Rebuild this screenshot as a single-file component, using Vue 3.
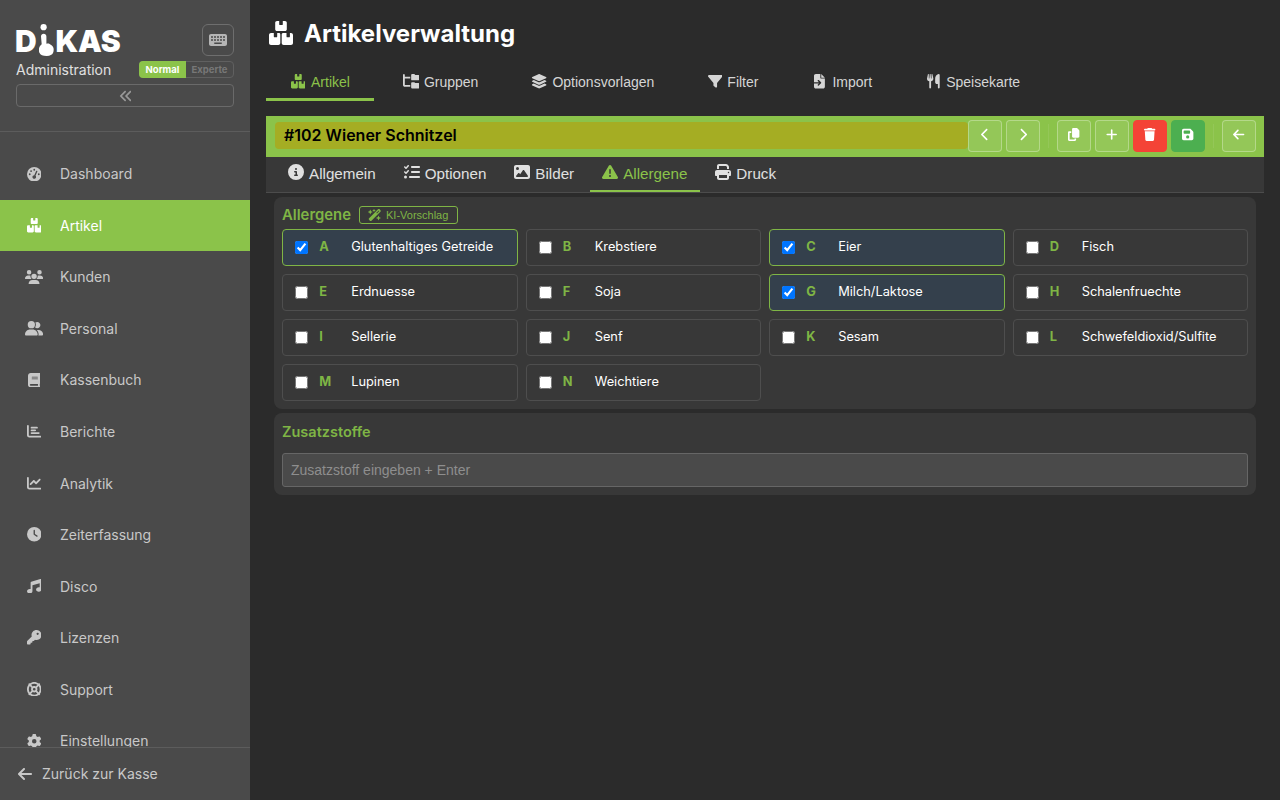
<template>
  <div class="app">
    <aside class="sidebar">
      <div class="side-head">
        <div class="logo-row">
          <div class="logo">
            <span>D</span>
            <svg class="finger" viewBox="0 0 15 32">
              <circle cx="4.6" cy="3.2" r="3.1" />
              <path d="M2 12.5c0-1.6 1.2-2.7 2.7-2.7s2.7 1.1 2.7 2.7v7.300c1-.5 2.300-.5 3.200.1 1.600.9 3.200 2 3.800 3.800.500 1.600.300 4-.400 5.400-.900 1.700-2.800 2.900-6.300 2.900-3.800 0-6.300-.900-7.300-3.200-.900-2-.700-4.500.300-6.300.600-1 1.300-1.700 2-2.300z" />
            </svg>
            <span>KAS</span>
          </div>
          <button class="kbd-btn" type="button">
            <svg class="ico" viewBox="0 0 576 512"><path fill-rule="evenodd" :d="icons.keyboard" /></svg>
          </button>
        </div>
        <div class="sub-row">
          <span class="sub-title">Administration</span>
          <div class="mode">
            <span class="mode-on">Normal</span>
            <span class="mode-off">Experte</span>
          </div>
        </div>
        <button class="collapse" type="button">
          <svg class="ico" viewBox="0 0 448 512"><path :d="icons.anglesLeft" /></svg>
        </button>
      </div>
      <nav class="side-nav">
        <a v-for="item in navItems" :key="item.label" class="nav-item" :class="{ active: item.label === 'Artikel' }">
          <span class="nav-icon">
            <svg class="ico" :viewBox="viewBox(item)"><path :d="icons[item.icon]" /></svg>
          </span>
          {{ item.label }}
        </a>
      </nav>
      <div class="side-foot">
        <svg class="ico" viewBox="0 0 448 512"><path :d="icons.arrowLeft" /></svg>
        Zurück zur Kasse
      </div>
    </aside>

    <main class="main">
      <h1 class="page-title">
        <svg class="ico" viewBox="0 0 24 24"><path :d="icons.boxes" /></svg>
        Artikelverwaltung
      </h1>
      <div class="top-tabs">
        <a v-for="tab in topTabs" :key="tab.label" class="top-tab" :class="{ active: tab.label === 'Artikel' }">
          <span class="tab-icon">
            <svg class="ico" :viewBox="viewBox(tab)"><path :d="icons[tab.icon]" /></svg>
          </span>
          {{ tab.label }}
        </a>
      </div>

      <div class="item-bar">
        <div class="item-name">#102 Wiener Schnitzel</div>
        <button class="bar-btn" type="button"><svg class="ico" viewBox="0 0 320 512"><path :d="icons.chevronLeft" /></svg></button>
        <button class="bar-btn" type="button"><svg class="ico" viewBox="0 0 320 512"><path :d="icons.chevronRight" /></svg></button>
        <span class="bar-sep"></span>
        <button class="bar-btn" type="button"><svg class="ico" viewBox="0 0 448 512"><path :d="icons.copy" /></svg></button>
        <button class="bar-btn" type="button"><svg class="ico" viewBox="0 0 448 512"><path :d="icons.plus" /></svg></button>
        <button class="bar-btn red" type="button"><svg class="ico" viewBox="0 0 448 512"><path :d="icons.trash" /></svg></button>
        <button class="bar-btn green" type="button"><svg class="ico" viewBox="0 0 448 512"><path :d="icons.floppy" /></svg></button>
        <span class="bar-sep"></span>
        <button class="bar-btn" type="button"><svg class="ico" viewBox="0 0 448 512"><path :d="icons.arrowLeft" /></svg></button>
      </div>

      <div class="sub-tabs">
        <a v-for="tab in subTabs" :key="tab.label" class="sub-tab" :class="{ active: tab.label === 'Allergene' }">
          <svg class="ico" viewBox="0 0 512 512"><path :d="icons[tab.icon]" /></svg>
          {{ tab.label }}
        </a>
      </div>

      <section class="panel allergens">
        <div class="panel-head">
          <span class="panel-title">Allergene</span>
          <button class="ai-btn" type="button">
            <svg class="ico" viewBox="0 0 576 512"><path :d="icons.wand" /></svg>
            KI-Vorschlag
          </button>
        </div>
        <div class="allergen-grid">
          <label v-for="a in allergens" :key="a.code" class="allergen" :class="{ selected: a.on }">
            <input type="checkbox" :checked="a.on" />
            <span class="code">{{ a.code }}</span>
            <span class="name">{{ a.name }}</span>
          </label>
        </div>
      </section>

      <section class="panel additives">
        <div class="panel-title">Zusatzstoffe</div>
        <input class="add-input" type="text" placeholder="Zusatzstoff eingeben + Enter" />
      </section>
    </main>
  </div>
</template>

<script setup>
const icons = {
  keyboard: 'M64 64C28.7 64 0 92.700 0 128V384c0 35.300 28.700 64 64 64H512c35.300 0 64-28.700 64-64V128c0-35.300-28.700-64-64-64H64zM72 128h48v64H72zM168 128h48v64H168zM264 128h48v64H264zM360 128h48v64H360zM456 128h48v64H456zM72 224h48v64H72zM168 224h48v64H168zM264 224h48v64H264zM360 224h48v64H360zM456 224h48v64H456zM168 336H408v48H168z',
  anglesLeft: 'M41.4 233.4c-12.5 12.5-12.5 32.8 0 45.3l160 160c12.5 12.5 32.8 12.5 45.3 0s12.5-32.8 0-45.3L109.3 256 246.6 118.6c12.5-12.5 12.5-32.8 0-45.3s-32.8-12.5-45.3 0l-160 160zm352-160l-160 160c-12.5 12.5-12.5 32.8 0 45.3l160 160c12.5 12.5 32.8 12.5 45.3 0s12.5-32.8 0-45.3L301.3 256 438.6 118.6c12.5-12.5 12.5-32.8 0-45.3s-32.8-12.5-45.3 0z',
  gauge: 'M0 256a256 256 0 1 1 512 0A256 256 0 1 1 0 256zM288 96a32 32 0 1 0 -64 0 32 32 0 1 0 64 0zM256 416c35.3 0 64-28.7 64-64c0-17.4-6.9-33.1-18.1-44.6L366 161.7c5.3-12.1-.2-26.3-12.3-31.6s-26.3 .2-31.6 12.3L257.9 288c-.6 0-1.3 0-1.9 0c-35.3 0-64 28.7-64 64s28.7 64 64 64zM176 144a32 32 0 1 0 -64 0 32 32 0 1 0 64 0zM96 288a32 32 0 1 0 0-64 32 32 0 1 0 0 64zm352-32a32 32 0 1 0 -64 0 32 32 0 1 0 64 0z',
  boxes: 'M8 0h2.200v3.200c0 .5.4.9.9.9h1.800c.5 0 .9-.4.9-.9V0H16c1 0 1.800.8 1.800 1.800V8.200c0 1-.8 1.800-1.800 1.800H8c-1 0-1.800-.8-1.800-1.800V1.800C6.200.8 7 0 8 0zM2 12h2.800v3.400c0 .5.4.9.9.9h1.600c.5 0 .9-.4.9-.9V12H10c.9 0 1.300.6 1.300 1.500V22c0 1.100-.9 2-2 2H2c-1.100 0-2-.9-2-2V14c0-1.100.9-2 2-2zM14.700 12h2.800v3.400c0 .5.4.9.9.9h1.600c.5 0 .9-.4.9-.9V12H22c1.100 0 2 .9 2 2V22c0 1.100-.9 2-2 2H14.700c-1.100 0-2-.9-2-2V13.500c0-.9.400-1.500 2-1.500z',
  users: 'M144 0a80 80 0 1 1 0 160A80 80 0 1 1 144 0zM512 0a80 80 0 1 1 0 160A80 80 0 1 1 512 0zM0 298.700C0 239.800 47.800 192 106.700 192h42.700c15.900 0 31 3.500 44.600 9.700c-1.300 7.200-1.900 14.700-1.900 22.300c0 38.200 16.800 72.500 43.300 96c-.2 0-.4 0-.7 0H21.300C9.600 320 0 310.400 0 298.700zM405.300 320c-.2 0-.4 0-.7 0c26.600-23.500 43.300-57.800 43.300-96c0-7.600-.7-15-1.900-22.300c13.600-6.300 28.700-9.700 44.600-9.700h42.700C592.200 192 640 239.800 640 298.700c0 11.800-9.600 21.300-21.300 21.300H405.300zM224 224a96 96 0 1 1 192 0 96 96 0 1 1 -192 0zM128 485.300C128 411.700 187.700 352 261.300 352H378.700C452.300 352 512 411.700 512 485.300c0 14.700-11.900 26.700-26.700 26.700H154.700c-14.700 0-26.700-11.900-26.700-26.700z',
  userGroup: 'M96 128a128 128 0 1 1 256 0A128 128 0 1 1 96 128zM0 482.300C0 383.800 79.800 304 178.300 304h91.400C368.200 304 448 383.800 448 482.300c0 16.400-13.300 29.700-29.700 29.700H29.700C13.300 512 0 498.700 0 482.300zM609.300 512H471.400c5.400-9.400 8.600-20.300 8.600-32v-8c0-60.700-27.100-115.200-69.800-151.800c2.400-.1 4.700-.2 7.100-.2h61.400C567.800 320 640 392.200 640 481.300c0 17-13.800 30.700-30.700 30.700zM432 256c-31 0-59-12.600-79.300-32.900C372.400 196.500 384 163.600 384 128c0-26.800-6.600-52.100-18.300-74.300C384.300 40.100 407.200 32 432 32c61.900 0 112 50.100 112 112s-50.100 112-112 112z',
  book: 'M96 0C43 0 0 43 0 96V416c0 53 43 96 96 96H384h32c17.700 0 32-14.300 32-32s-14.300-32-32-32V384c17.700 0 32-14.300 32-32V32c0-17.700-14.300-32-32-32H384 96zm0 384H352v64H96c-17.700 0-32-14.300-32-32s14.300-32 32-32zm32-240c0-8.800 7.200-16 16-16H336c8.800 0 16 7.200 16 16s-7.200 16-16 16H144c-8.800 0-16-7.200-16-16zm16 48H336c8.800 0 16 7.200 16 16s-7.200 16-16 16H144c-8.800 0-16-7.200-16-16s7.200-16 16-16z',
  chartBar: 'M32 32c17.700 0 32 14.300 32 32V400c0 8.800 7.200 16 16 16H480c17.700 0 32 14.300 32 32s-14.300 32-32 32H80c-44.200 0-80-35.800-80-80V64C0 46.300 14.300 32 32 32zm96 96c0-17.700 14.300-32 32-32l192 0c17.700 0 32 14.300 32 32s-14.300 32-32 32l-192 0c-17.700 0-32-14.300-32-32zm32 64H288c17.700 0 32 14.300 32 32s-14.300 32-32 32H160c-17.700 0-32-14.300-32-32s14.300-32 32-32zm0 96H416c17.700 0 32 14.300 32 32s-14.300 32-32 32H160c-17.700 0-32-14.300-32-32s14.300-32 32-32z',
  chartLine: 'M64 64c0-17.700-14.300-32-32-32S0 46.300 0 64V400c0 44.200 35.800 80 80 80H480c17.700 0 32-14.300 32-32s-14.300-32-32-32H80c-8.800 0-16-7.200-16-16V64zm406.600 86.600c12.500-12.500 12.500-32.800 0-45.300s-32.800-12.500-45.300 0L320 210.700l-57.400-57.400c-12.500-12.500-32.800-12.500-45.300 0l-112 112c-12.500 12.500-12.500 32.800 0 45.300s32.800 12.500 45.300 0L240 221.300l57.400 57.400c12.500 12.500 32.800 12.500 45.300 0l128-128z',
  clock: 'M256 0a256 256 0 1 1 0 512A256 256 0 1 1 256 0zM232 120V256c0 8 4 15.500 10.700 20l96 64c11 7.400 25.900 4.400 33.300-6.700s4.400-25.900-6.700-33.300L280 243.200V120c0-13.300-10.700-24-24-24s-24 10.700-24 24z',
  music: 'M499.100 6.300c8.100 6 12.900 15.600 12.900 25.700v72V368c0 44.200-43 80-96 80s-96-35.800-96-80s43-80 96-80c11.200 0 22 1.600 32 4.600V147L192 223.800V432c0 44.200-43 80-96 80s-96-35.800-96-80s43-80 96-80c11.200 0 22 1.600 32 4.600V200 128c0-14.100 9.300-26.600 22.800-30.700l320-96c9.700-2.900 20.200-1.100 28.300 4.900z',
  key: 'M336 352c97.200 0 176-78.800 176-176S433.200 0 336 0S160 78.800 160 176c0 18.700 2.900 36.800 8.300 53.700L7 391c-4.500 4.500-7 10.600-7 17v80c0 13.300 10.700 24 24 24h80c13.300 0 24-10.700 24-24V448h40c13.300 0 24-10.700 24-24V384h40c6.400 0 12.500-2.500 17-7l33.300-33.300c16.900 5.400 35 8.300 53.700 8.300zM376 96a40 40 0 1 1 0 80 40 40 0 1 1 0-80z',
  lifeRing: 'M367.200 412.500C335.900 434.900 297.500 448 256 448s-79.900-13.100-111.200-35.500l58-58c15.800 8.600 34 13.500 53.300 13.500s37.400-4.900 53.300-13.500l58 58zm90.700 .8c33.800-43.400 54-98 54-157.300s-20.200-113.900-54-157.300c9-12.500 7.900-30.100-3.400-41.300S425.800 45 413.300 54C369.900 20.200 315.300 0 256 0S142.100 20.200 98.700 54c-12.500-9-30.100-7.900-41.300 3.400S45 86.200 54 98.700C20.200 142.100 0 196.700 0 256s20.200 113.900 54 157.300c-9 12.500-7.900 30.100 3.400 41.300S86.200 467 98.700 458c43.400 33.800 98 54 157.300 54s113.900-20.200 157.300-54c12.500 9 30.100 7.900 41.300-3.400s12.400-28.800 3.400-41.300zm-45.500-46.100l-58-58c8.600-15.800 13.500-34 13.500-53.300s-4.900-37.400-13.500-53.300l58-58C434.900 176.100 448 214.500 448 256s-13.100 79.900-35.500 111.200zM367.200 99.500l-58 58c-15.800-8.600-34-13.500-53.300-13.500s-37.400 4.900-53.300 13.500l-58-58C176.100 77.100 214.500 64 256 64s79.900 13.100 111.200 35.500zM157.500 309.300l-58 58C77.100 335.900 64 297.500 64 256s13.100-79.900 35.500-111.200l58 58c-8.600 15.800-13.500 34-13.500 53.300s4.900 37.400 13.500 53.300zM208 256a48 48 0 1 1 96 0 48 48 0 1 1 -96 0z',
  gear: 'M495.900 166.600c3.200 8.700 .5 18.400-6.400 24.600l-43.300 39.400c1.100 8.300 1.700 16.800 1.700 25.400s-.6 17.100-1.700 25.400l43.300 39.400c6.900 6.200 9.600 15.900 6.400 24.600c-4.400 11.900-9.700 23.300-15.800 34.300l-4.700 8.100c-6.600 11-14 21.400-22.100 31.200c-5.900 7.200-15.700 9.600-24.500 6.800l-55.700-17.700c-13.400 10.300-28.200 18.900-44 25.400l-12.500 57.100c-2 9.100-9 16.300-18.200 17.800c-13.800 2.300-28 3.500-42.500 3.500s-28.700-1.200-42.500-3.500c-9.200-1.500-16.200-8.700-18.200-17.800l-12.500-57.100c-15.800-6.500-30.600-15.100-44-25.400L83.100 425.900c-8.800 2.800-18.600 .3-24.500-6.800c-8.100-9.800-15.500-20.200-22.100-31.200l-4.700-8.100c-6.100-11-11.400-22.400-15.800-34.300c-3.200-8.700-.5-18.400 6.400-24.600l43.300-39.400C64.600 273.100 64 264.600 64 256s.6-17.100 1.700-25.400L22.400 191.200c-6.900-6.200-9.600-15.900-6.400-24.600c4.400-11.900 9.700-23.300 15.800-34.300l4.700-8.100c6.600-11 14-21.400 22.100-31.200c5.900-7.200 15.700-9.600 24.500-6.800l55.700 17.700c13.400-10.300 28.200-18.900 44-25.400l12.500-57.100c2-9.100 9-16.300 18.200-17.800C227.300 1.200 241.500 0 256 0s28.700 1.200 42.500 3.500c9.200 1.500 16.200 8.700 18.200 17.800l12.500 57.100c15.800 6.500 30.600 15.100 44 25.400l55.700-17.700c8.800-2.800 18.600-.3 24.500 6.800c8.100 9.800 15.500 20.200 22.100 31.200l4.700 8.100c6.100 11 11.400 22.400 15.800 34.300zM256 336a80 80 0 1 0 0-160 80 80 0 1 0 0 160z',
  arrowLeft: 'M9.400 233.400c-12.500 12.500-12.500 32.800 0 45.300l160 160c12.500 12.500 32.800 12.500 45.300 0s12.500-32.800 0-45.300L109.200 288 416 288c17.700 0 32-14.300 32-32s-14.300-32-32-32l-306.700 0L214.600 118.600c12.500-12.500 12.500-32.800 0-45.300s-32.800-12.500-45.300 0l-160 160z',
  folderTree: 'M64 32C64 14.300 49.700 0 32 0S0 14.300 0 32v96V384c0 35.300 28.700 64 64 64H256V384H64V160H256V96H64V32zM288 192c0 17.700 14.300 32 32 32H544c17.700 0 32-14.300 32-32V64c0-17.700-14.300-32-32-32H445.300c-8.500 0-16.600-3.400-22.600-9.400L409.400 9.400c-6-6-14.100-9.400-22.600-9.400H320c-17.700 0-32 14.300-32 32V192zm0 288c0 17.700 14.300 32 32 32H544c17.700 0 32-14.300 32-32V352c0-17.700-14.300-32-32-32H445.300c-8.500 0-16.600-3.400-22.600-9.400l-13.300-13.300c-6-6-14.100-9.400-22.600-9.400H320c-17.700 0-32 14.300-32 32V480z',
  layers: 'M264.500 5.200c14.900-6.900 32.100-6.900 47 0l218.600 101c8.500 3.900 13.900 12.400 13.900 21.800s-5.400 17.900-13.900 21.800l-218.600 101c-14.900 6.900-32.100 6.900-47 0L45.900 149.800C37.400 145.800 32 137.300 32 128s5.400-17.900 13.900-21.800L264.500 5.200zM476.900 209.600l53.200 24.600c8.500 3.900 13.900 12.400 13.900 21.800s-5.400 17.900-13.900 21.800l-218.600 101c-14.900 6.900-32.100 6.900-47 0L45.900 277.800C37.400 273.800 32 265.300 32 256s5.400-17.900 13.900-21.800l53.200-24.600 152 70.200c23.400 10.800 50.400 10.800 73.800 0l152-70.200zm-152 198.200l152-70.200 53.200 24.600c8.500 3.900 13.900 12.400 13.900 21.800s-5.400 17.900-13.900 21.800l-218.600 101c-14.900 6.900-32.100 6.900-47 0L45.900 405.800C37.400 401.800 32 393.300 32 384s5.400-17.900 13.900-21.800l53.200-24.600 152 70.200c23.400 10.800 50.400 10.800 73.800 0z',
  filter: 'M3.900 54.900C10.500 40.900 24.500 32 40 32H472c15.500 0 29.500 8.900 36.100 22.900s4.600 30.500-5.200 42.500L320 320.900V448c0 12.100-6.800 23.200-17.700 28.600s-23.800 4.300-33.500-3l-64-48c-8.100-6-12.800-15.500-12.800-25.600V320.900L9 97.300C-.7 85.400-2.800 68.800 3.900 54.900z',
  fileImport: 'M64 0C28.700 0 0 28.700 0 64V288H174.100l-39-39c-9.400-9.400-9.400-24.600 0-33.900s24.600-9.400 33.900 0l80 80c9.400 9.400 9.400 24.600 0 33.900l-80 80c-9.400 9.400-24.600 9.400-33.900 0s-9.400-24.600 0-33.900l39-39H0V448c0 35.300 28.700 64 64 64H320c35.300 0 64-28.700 64-64V160H256c-17.700 0-32-14.300-32-32V0H64zM256 0V128H384L256 0z',
  utensils: 'M416 0C400 0 288 32 288 176V288c0 35.300 28.700 64 64 64h32V480c0 17.700 14.300 32 32 32s32-14.300 32-32V352 240 32c0-17.700-14.300-32-32-32zM64 16C64 7.800 57.900 1 49.700 .1S34.200 4.600 32.400 12.500L2.100 148.800C.7 155.100 0 161.500 0 167.900c0 45.900 35.100 83.600 80 87.700V480c0 17.700 14.300 32 32 32s32-14.300 32-32V255.600c44.900-4.100 80-41.800 80-87.700c0-6.400-.7-12.800-2.100-19.100L191.600 12.500c-1.800-8-9.300-13.300-17.400-12.400S160 7.800 160 16V150.200c0 5.400-4.400 9.800-9.800 9.800c-5.100 0-9.300-3.900-9.800-9L127.900 14.600C127.200 6.300 120.300 0 112 0s-15.200 6.300-15.900 14.600L83.700 151c-.5 5.100-4.700 9-9.800 9c-5.400 0-9.800-4.400-9.800-9.800V16z',
  chevronLeft: 'M9.400 233.400c-12.500 12.500-12.500 32.800 0 45.300l192 192c12.500 12.500 32.800 12.500 45.300 0s12.500-32.800 0-45.300L77.300 256 246.600 86.600c12.500-12.500 12.500-32.800 0-45.300s-32.800-12.500-45.300 0l-192 192z',
  chevronRight: 'M310.600 233.400c12.500 12.500 12.500 32.800 0 45.300l-192 192c-12.500 12.500-32.800 12.500-45.300 0s-12.500-32.800 0-45.300L242.700 256 73.400 86.600c-12.500-12.500-12.500-32.800 0-45.300s32.800-12.500 45.300 0l192 192z',
  copy: 'M208 0H332.100c12.700 0 24.900 5.100 33.900 14.100l67.900 67.900c9 9 14.100 21.200 14.100 33.900V336c0 26.500-21.500 48-48 48H208c-26.500 0-48-21.500-48-48V48c0-26.500 21.500-48 48-48zM48 128h80v64H64V448H256V416h64v48c0 26.500-21.500 48-48 48H48c-26.500 0-48-21.500-48-48V176c0-26.500 21.500-48 48-48z',
  plus: 'M256 80c0-17.700-14.300-32-32-32s-32 14.300-32 32V224H48c-17.700 0-32 14.300-32 32s14.300 32 32 32H192V432c0 17.700 14.300 32 32 32s32-14.300 32-32V288H400c17.700 0 32-14.300 32-32s-14.300-32-32-32H256V80z',
  trash: 'M135.200 17.700L128 32H32C14.300 32 0 46.300 0 64S14.300 96 32 96H416c17.700 0 32-14.300 32-32s-14.300-32-32-32H320l-7.200-14.300C307.400 6.800 296.300 0 284.200 0H163.800c-12.100 0-23.200 6.800-28.600 17.700zM416 128H32L53.200 467c1.600 25.300 22.600 45 47.900 45H346.900c25.300 0 46.300-19.700 47.900-45L416 128z',
  floppy: 'M64 32C28.700 32 0 60.700 0 96V416c0 35.300 28.700 64 64 64H384c35.300 0 64-28.700 64-64V173.300c0-17-6.700-33.300-18.700-45.300L352 50.700C340 38.700 323.700 32 306.700 32H64zm0 96c0-17.700 14.300-32 32-32H288c17.700 0 32 14.300 32 32v64c0 17.700-14.300 32-32 32H96c-17.700 0-32-14.300-32-32V128zM224 288a64 64 0 1 1 0 128 64 64 0 1 1 0-128z',
  info: 'M256 512A256 256 0 1 0 256 0a256 256 0 1 0 0 512zM216 336h24V272H216c-13.300 0-24-10.700-24-24s10.700-24 24-24h48c13.300 0 24 10.700 24 24v88h8c13.300 0 24 10.700 24 24s-10.700 24-24 24H216c-13.300 0-24-10.700-24-24s10.700-24 24-24zm40-208a32 32 0 1 1 0 64 32 32 0 1 1 0-64z',
  listCheck: 'M152.100 38.200c9.900 8.900 10.700 24 1.800 33.900l-72 80c-4.400 4.900-10.600 7.800-17.200 7.900s-12.900-2.400-17.600-7L7 113C-2.300 103.600-2.300 88.400 7 79s24.600-9.400 33.900 0l22.100 22.100 55.100-61.200c8.900-9.900 24-10.700 33.900-1.800zm0 160c9.900 8.900 10.700 24 1.800 33.900l-72 80c-4.400 4.900-10.600 7.800-17.200 7.900s-12.900-2.400-17.600-7L7 273c-9.400-9.400-9.400-24.600 0-33.900s24.600-9.400 33.900 0l22.100 22.100 55.100-61.200c8.900-9.900 24-10.700 33.900-1.800zM224 96c0-17.700 14.300-32 32-32H480c17.700 0 32 14.300 32 32s-14.300 32-32 32H256c-17.700 0-32-14.300-32-32zm0 160c0-17.700 14.300-32 32-32H480c17.700 0 32 14.300 32 32s-14.300 32-32 32H256c-17.700 0-32-14.300-32-32zM160 416c0-17.700 14.300-32 32-32H480c17.700 0 32 14.300 32 32s-14.300 32-32 32H192c-17.700 0-32-14.300-32-32zM48 368a48 48 0 1 1 0 96 48 48 0 1 1 0-96z',
  image: 'M0 96C0 60.700 28.700 32 64 32H448c35.300 0 64 28.700 64 64V416c0 35.300-28.700 64-64 64H64c-35.300 0-64-28.700-64-64V96zM323.800 202.500c-4.500-6.600-11.900-10.500-19.800-10.500s-15.400 3.900-19.800 10.500l-87 127.600L170.700 297c-4.600-5.700-11.500-9-18.700-9s-14.200 3.300-18.700 9l-64 80c-5.800 7.200-6.900 17.100-2.900 25.400s12.400 13.600 21.600 13.600h96 32H424c8.900 0 17.100-4.900 21.200-12.800s3.600-17.400-1.400-24.700l-120-176zM112 192a48 48 0 1 0 0-96 48 48 0 1 0 0 96z',
  warning: 'M256 32c14.200 0 27.300 7.500 34.500 19.800l216 368c7.300 12.400 7.300 27.700 .2 40.100S486.300 480 472 480H40c-14.300 0-27.600-7.700-34.700-20.100s-7-27.800 .2-40.100l216-368C228.700 39.500 241.800 32 256 32zm0 128c-13.300 0-24 10.700-24 24V296c0 13.300 10.700 24 24 24s24-10.700 24-24V184c0-13.300-10.700-24-24-24zm32 224a32 32 0 1 0 -64 0 32 32 0 1 0 64 0z',
  print: 'M128 0C92.700 0 64 28.700 64 64v96h64V64H354.700L384 93.300V160h64V93.300c0-17-6.700-33.300-18.700-45.300L400 18.700C388 6.700 371.700 0 354.700 0H128zM384 352v32 64H128V384 368 352H384zm64 32h32c17.700 0 32-14.300 32-32V256c0-35.300-28.700-64-64-64H64c-35.300 0-64 28.700-64 64v96c0 17.700 14.300 32 32 32H64v64c0 35.300 28.700 64 64 64H384c35.300 0 64-28.700 64-64V384zM432 248a24 24 0 1 1 0 48 24 24 0 1 1 0-48z',
  wand: 'M234.700 42.700L197 56.800c-3 1.100-5 4-5 7.200s2 6.100 5 7.200l37.700 14.100L248.800 123c1.100 3 4 5 7.200 5s6.100-2 7.200-5l14.100-37.700L315 71.200c3-1.100 5-4 5-7.200s-2-6.100-5-7.200L277.300 42.700 263.200 5c-1.100-3-4-5-7.200-5s-6.100 2-7.200 5L234.700 42.700zM46.100 395.400c-18.700 18.700-18.700 49.100 0 67.900l34.600 34.600c18.700 18.700 49.100 18.700 67.900 0L529.900 116.500c18.700-18.700 18.700-49.100 0-67.900L495.300 14.100c-18.700-18.700-49.100-18.700-67.900 0L46.100 395.400zM484.600 82.600l-105 105-23.300-23.300 105-105 23.300 23.300zM7.500 117.200C3 118.900 0 123.200 0 128s3 9.100 7.500 10.800L64 160l21.200 56.500c1.700 4.500 6 7.500 10.800 7.500s9.100-3 10.800-7.500L128 160l56.500-21.200c4.500-1.700 7.500-6 7.500-10.800s-3-9.100-7.500-10.800L128 96 106.800 39.500C105.100 35 100.800 32 96 32s-9.100 3-10.800 7.500L64 96 7.500 117.200zm352 256c-4.500 1.700-7.500 6-7.500 10.800s3 9.100 7.500 10.800L416 416l21.200 56.500c1.700 4.500 6 7.500 10.800 7.500s9.100-3 10.800-7.500L480 416l56.500-21.200c4.500-1.700 7.500-6 7.500-10.800s-3-9.100-7.500-10.800L480 352l-21.200-56.500c-1.700-4.500-6-7.500-10.800-7.500s-9.100 3-10.800 7.500L416 352l-56.500 21.200z'
}

const navItems = [
  { label: 'Dashboard', icon: 'gauge', w: 512 },
  { label: 'Artikel', icon: 'boxes', w: 24, h: 24 },
  { label: 'Kunden', icon: 'users', w: 640 },
  { label: 'Personal', icon: 'userGroup', w: 640 },
  { label: 'Kassenbuch', icon: 'book', w: 448 },
  { label: 'Berichte', icon: 'chartBar', w: 512 },
  { label: 'Analytik', icon: 'chartLine', w: 512 },
  { label: 'Zeiterfassung', icon: 'clock', w: 512 },
  { label: 'Disco', icon: 'music', w: 512 },
  { label: 'Lizenzen', icon: 'key', w: 512 },
  { label: 'Support', icon: 'lifeRing', w: 512 },
  { label: 'Einstellungen', icon: 'gear', w: 512 }
]

const topTabs = [
  { label: 'Artikel', icon: 'boxes', w: 24, h: 24 },
  { label: 'Gruppen', icon: 'folderTree', w: 576 },
  { label: 'Optionsvorlagen', icon: 'layers', w: 576 },
  { label: 'Filter', icon: 'filter', w: 512 },
  { label: 'Import', icon: 'fileImport', w: 384 },
  { label: 'Speisekarte', icon: 'utensils', w: 448 }
]

const subTabs = [
  { label: 'Allgemein', icon: 'info' },
  { label: 'Optionen', icon: 'listCheck' },
  { label: 'Bilder', icon: 'image' },
  { label: 'Allergene', icon: 'warning' },
  { label: 'Druck', icon: 'print' }
]

const allergens = [
  { code: 'A', name: 'Glutenhaltiges Getreide', on: true },
  { code: 'B', name: 'Krebstiere', on: false },
  { code: 'C', name: 'Eier', on: true },
  { code: 'D', name: 'Fisch', on: false },
  { code: 'E', name: 'Erdnuesse', on: false },
  { code: 'F', name: 'Soja', on: false },
  { code: 'G', name: 'Milch/Laktose', on: true },
  { code: 'H', name: 'Schalenfruechte', on: false },
  { code: 'I', name: 'Sellerie', on: false },
  { code: 'J', name: 'Senf', on: false },
  { code: 'K', name: 'Sesam', on: false },
  { code: 'L', name: 'Schwefeldioxid/Sulfite', on: false },
  { code: 'M', name: 'Lupinen', on: false },
  { code: 'N', name: 'Weichtiere', on: false }
]

function viewBox(item) {
  return `0 0 ${item.w} ${item.h || 512}`
}
</script>

<style>
html,
body {
  margin: 0;
  background: #2b2b2b;
}
</style>

<style scoped>
.app {
  display: flex;
  height: 800px;
  overflow: hidden;
  background: #2b2b2b;
  font-family: Inter, "Liberation Sans", sans-serif;
}

.ico {
  display: block;
  height: 1em;
  fill: currentColor;
  flex: none;
}

/* sidebar */
.sidebar {
  width: 250px;
  flex: none;
  display: flex;
  flex-direction: column;
  background: #4a4a4a;
  color: #c8c8c8;
}

.side-head {
  height: 132px;
  box-sizing: border-box;
  padding: 24px 16px 0;
  border-bottom: 1px solid #5c5c5c;
  flex: none;
}

.logo-row {
  display: flex;
  justify-content: space-between;
  height: 32px;
}

.logo {
  display: flex;
  align-items: flex-end;
  height: 32px;
  margin-left: -1px;
  color: #fff;
  font-size: 30px;
  font-weight: 900;
  letter-spacing: -0.2px;
}

.logo span {
  display: block;
  height: 31px;
  line-height: 32px;
}

.finger {
  width: 15px;
  height: 32px;
  margin: 0 1px 0 3px;
  fill: #fff;
  flex: none;
}

.kbd-btn {
  width: 32px;
  height: 32px;
  padding: 0;
  display: flex;
  align-items: center;
  justify-content: center;
  background: transparent;
  border: 1px solid #6e6e6e;
  border-radius: 6px;
  color: #b5b5b5;
  font-size: 16px;
}

.sub-row {
  display: flex;
  justify-content: space-between;
  align-items: center;
  margin-top: 5px;
  height: 17px;
}

.sub-title {
  font-size: 14px;
  color: #e0e0e0;
}

.mode {
  display: flex;
  height: 17px;
  box-sizing: border-box;
  border: 1px solid #606060;
  border-radius: 4px;
  font-size: 9.5px;
  font-weight: 700;
  line-height: 15px;
  width: 95px;
}

.mode-on {
  width: 47px;
  margin: -1px 0 -1px -1px;
  padding: 1px 0;
  text-align: center;
  background: #8bc34a;
  color: #fff;
  border-radius: 4px 0 0 4px;
}

.mode-off {
  flex: 1;
  text-align: center;
  color: #777;
}

.collapse {
  width: 100%;
  height: 23px;
  margin-top: 6px;
  display: flex;
  align-items: center;
  justify-content: center;
  background: transparent;
  border: 1px solid #6a6a6a;
  border-radius: 4px;
  color: #989898;
  font-size: 14px;
  padding: 0;
}

.side-nav {
  flex: 1;
  min-height: 0;
  overflow: hidden;
  padding-top: 16px;
}

.nav-item {
  display: flex;
  align-items: center;
  height: 51.55px;
  padding-left: 25px;
  font-size: 14px;
  color: #c8c8c8;
}

.nav-item.active {
  background: #8bc34a;
  color: #fff;
}

.nav-icon {
  width: 18px;
  margin-right: 17px;
  display: flex;
  justify-content: center;
  font-size: 14.5px;
}

.side-foot {
  height: 53px;
  flex: none;
  box-sizing: border-box;
  display: flex;
  align-items: center;
  gap: 10px;
  padding: 0 0 1px 18px;
  border-top: 1px solid #5c5c5c;
  background: #4a4a4a;
  font-size: 14px;
  color: #c8c8c8;
}

.side-foot .ico {
  font-size: 16px;
}

/* main */
.main {
  flex: 1;
  min-width: 0;
  padding: 0 16px;
  color: #e0e0e0;
}

.page-title {
  display: flex;
  align-items: center;
  gap: 11px;
  height: 66px;
  box-sizing: border-box;
  margin: 0;
  padding: 0 0 0 3px;
  font-size: 24px;
  font-weight: 700;
  color: #fff;
}

.top-tabs {
  display: flex;
  gap: 5px;
  height: 35px;
}

.top-tab {
  display: flex;
  align-items: center;
  gap: 5px;
  padding: 0 24px 1px;
  height: 35px;
  box-sizing: border-box;
  font-family: "Liberation Sans", sans-serif;
  font-size: 14px;
  color: #d5d5d5;
  border-bottom: 3px solid transparent;
}

.tab-icon {
  width: 16px;
  display: flex;
  justify-content: center;
  font-size: 14.5px;
}

.top-tab:nth-child(4) .tab-icon {
  width: 15px;
}

.top-tab.active {
  color: #8bc34a;
  border-bottom-color: #8bc34a;
}

.item-bar {
  display: flex;
  align-items: flex-start;
  gap: 4px;
  height: 41px;
  box-sizing: border-box;
  margin-top: 15px;
  padding: 4px 8px 0 9px;
  background: #8bc34a;
}

.item-name {
  flex: 1;
  height: 27px;
  margin: 2px -4px 0 0;
  padding-left: 9px;
  line-height: 27px;
  border-radius: 4px;
  background: #a5ad23;
  color: #000;
  font-size: 16px;
  font-weight: 600;
}

.bar-btn {
  width: 34px;
  height: 32px;
  padding: 0 0 3px;
  display: flex;
  align-items: center;
  justify-content: center;
  background: rgba(255, 255, 255, 0.08);
  border: 1px solid rgba(255, 255, 255, 0.3);
  border-radius: 4px;
  color: #fff;
  font-size: 13px;
}

.bar-btn.red {
  background: #f44336;
  border-color: #f44336;
}

.bar-btn.green {
  background: #4caf50;
  border-color: #4caf50;
}

.bar-sep {
  width: 1px;
  height: 24px;
  margin: 4px 4px 0;
  background: rgba(255, 255, 255, 0.08);
}

.sub-tabs {
  display: flex;
  gap: 3px;
  height: 36px;
  box-sizing: border-box;
  padding-left: 9.5px;
  background: #383838;
  border-bottom: 1px solid #4c4c4c;
}

.sub-tab {
  display: flex;
  align-items: center;
  gap: 5px;
  height: 35px;
  box-sizing: border-box;
  padding: 0 12.5px 1px;
  font-family: "Liberation Sans", sans-serif;
  font-size: 15.2px;
  color: #e0e0e0;
  border-bottom: 2px solid transparent;
}

.sub-tab .ico {
  font-size: 16px;
  margin-top: -3px;
}

.sub-tab.active {
  color: #8bc34a;
  border-bottom-color: #8bc34a;
}

.panel {
  margin: 4px 8px 0;
  padding: 8px;
  border-radius: 8px;
  background: #383838;
}

.panel-head {
  display: flex;
  align-items: center;
  gap: 8px;
  height: 20px;
  margin-bottom: 4px;
}

.panel-title {
  font-size: 14.88px;
  font-weight: 600;
  color: #7fb545;
}

.ai-btn {
  display: flex;
  align-items: center;
  gap: 4px;
  height: 18px;
  padding: 0 8.5px;
  background: transparent;
  border: 1px solid #7fb545;
  border-radius: 3px;
  color: #7fb545;
  font-family: "Liberation Sans", sans-serif;
  font-size: 11px;
}

.ai-btn .ico {
  font-size: 12px;
}

.allergen-grid {
  display: grid;
  grid-template-columns: repeat(4, 1fr);
  gap: 8px;
}

.allergen {
  display: flex;
  align-items: center;
  height: 37px;
  box-sizing: border-box;
  padding: 0 12px;
  border: 1px solid #4e4e4e;
  border-radius: 4px;
  font-size: 12.8px;
  color: #fff;
}

.allergen.selected {
  background: #34404c;
  border-color: #7fb545;
}

.allergen input {
  width: 13px;
  height: 13px;
  margin: 0 11.2px 0 0;
  flex: none;
}

.code,
.name {
  padding-bottom: 2px;
}

.code {
  width: 32px;
  flex: none;
  font-weight: 700;
  color: #7fb545;
}

.additives {
  padding-bottom: 8px;
}

.additives .panel-title {
  font-size: 14.5px;
  line-height: 20px;
  padding-top: 1px;
  margin-bottom: 11px;
}

.add-input {
  display: block;
  width: 100%;
  height: 34px;
  box-sizing: border-box;
  padding: 0 8px;
  background: #4a4a4a;
  border: 1px solid #666;
  border-radius: 3px;
  color: #e0e0e0;
  font-family: "Liberation Sans", sans-serif;
  font-size: 14px;
}

.add-input::placeholder {
  color: #8e8e8e;
}
</style>
